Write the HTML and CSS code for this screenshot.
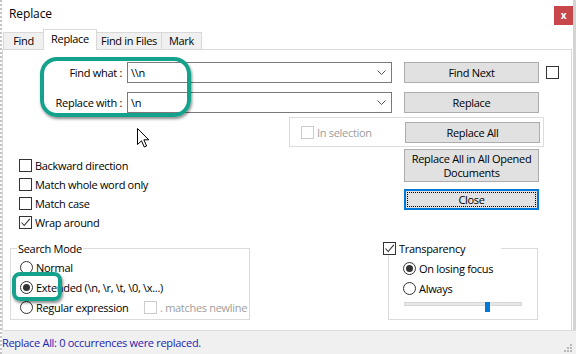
FILE: index.html
```html
<!DOCTYPE html>
<html lang="en">
<head>
    <meta charset="UTF-8">
    <title>Replace</title>
    <link rel="stylesheet" href="styles.css">
</head>
<body>
    <div class="window">
        <div class="titlebar">
            <span class="title">Replace</span>
            <span class="close-btn">x</span>
        </div>

        <div class="tabs">
            <div class="tab tab-find">Find</div>
            <div class="tab tab-replace active">Replace</div>
            <div class="tab tab-files">Find in Files</div>
            <div class="tab tab-mark">Mark</div>
        </div>

        <div class="panel">
            <div class="field-row first">
                <label class="field-label">Find what :</label>
                <div class="combo">
                    <span>\\n</span>
                    <svg class="chevron" width="9" height="6" viewBox="0 0 9 6"><polyline points="0.5,0.5 4.5,4.5 8.5,0.5" fill="none" stroke="#555" stroke-width="1"/></svg>
                </div>
                <button class="btn">Find Next</button>
                <span class="box"></span>
            </div>

            <div class="field-row">
                <label class="field-label">Replace with :</label>
                <div class="combo">
                    <span>\n</span>
                    <svg class="chevron" width="9" height="6" viewBox="0 0 9 6"><polyline points="0.5,0.5 4.5,4.5 8.5,0.5" fill="none" stroke="#555" stroke-width="1"/></svg>
                </div>
                <button class="btn">Replace</button>
            </div>

            <div class="selection-row">
                <div class="selection-box">
                    <span class="box disabled"></span>
                    <span class="muted">In selection</span>
                    <button class="btn">Replace All</button>
                </div>
            </div>

            <div class="middle">
                <div class="options">
                    <div class="check-row"><span class="box"></span>Backward direction</div>
                    <div class="check-row"><span class="box"></span>Match whole word only</div>
                    <div class="check-row"><span class="box"></span>Match case</div>
                    <div class="check-row"><span class="box checked"><svg width="11" height="11" viewBox="0 0 11 11"><polyline points="1.5,5.5 4.2,8.5 9.8,1.8" fill="none" stroke="#333" stroke-width="1.1"/></svg></span>Wrap around</div>
                </div>
                <div class="side-buttons">
                    <button class="btn tall">Replace All in All Opened<br>Documents</button>
                    <button class="btn focused">Close</button>
                </div>
            </div>

            <div class="modes">
                <fieldset class="group search-mode">
                    <legend>Search Mode</legend>
                    <div class="radio-row"><span class="radio"></span>Normal</div>
                    <div class="radio-row"><span class="radio on"></span>Extended (\n, \r, \t, \0, \x...)</div>
                    <div class="radio-row">
                        <span class="radio-label"><span class="radio"></span>Regular expression</span>
                        <span class="box disabled"></span>
                        <span class="muted">. matches newline</span>
                    </div>
                </fieldset>

                <fieldset class="group transparency">
                    <legend>
                        <span class="box checked"><svg width="11" height="11" viewBox="0 0 11 11"><polyline points="1.5,5.5 4.2,8.5 9.8,1.8" fill="none" stroke="#333" stroke-width="1.1"/></svg></span>
                        Transparency
                    </legend>
                    <div class="radio-row"><span class="radio on"></span>On losing focus</div>
                    <div class="radio-row"><span class="radio"></span>Always</div>
                    <div class="slider">
                        <div class="track"></div>
                        <div class="thumb" style="left: 81px"></div>
                    </div>
                </fieldset>
            </div>
        </div>

        <div class="statusbar">Replace All: 0 occurrences were replaced.</div>
    </div>

    <!-- screenshot annotations -->
    <div class="mark mark-fields"></div>
    <div class="mark mark-extended"></div>

    <svg class="cursor" width="13" height="20" viewBox="0 0 13 20">
        <path d="M0.5,0.5 L0.5,16.5 L4.5,12.8 L7.3,19 L9.6,18 L6.9,11.8 L11.8,11.8 Z" fill="#fff" stroke="#000" stroke-width="1" stroke-linejoin="round"/>
    </svg>

    <svg class="grip" width="10" height="10" viewBox="0 0 10 10">
        <rect x="7" y="1" width="2" height="2" fill="#b8b8b8"/>
        <rect x="4" y="4" width="2" height="2" fill="#b8b8b8"/>
        <rect x="7" y="4" width="2" height="2" fill="#b8b8b8"/>
        <rect x="1" y="7" width="2" height="2" fill="#b8b8b8"/>
        <rect x="4" y="7" width="2" height="2" fill="#b8b8b8"/>
        <rect x="7" y="7" width="2" height="2" fill="#b8b8b8"/>
    </svg>
</body>
</html>
```

FILE: styles.css
```css
* {
    margin: 0;
    padding: 0;
    box-sizing: border-box;
}

body {
    position: relative;
    width: 576px;
    height: 354px;
    overflow: hidden;
    font-family: "Open Sans", "Noto Sans", sans-serif;
    font-size: 11px;
    letter-spacing: -0.3px;
    color: #000;
    background: #fff;
}

.window {
    display: flex;
    flex-direction: column;
    height: 354px;
    border-left: 2px dotted #c4c4c4;
    border-right: 3px solid #d4d4d4;
}

/* title bar */
.titlebar {
    height: 29px;
    display: flex;
    align-items: flex-start;
    justify-content: space-between;
    padding-left: 7px;
}

.title {
    font-size: 12px;
    letter-spacing: -0.1px;
    line-height: 14px;
    margin-top: 7px;
}

.close-btn {
    width: 19px;
    height: 19px;
    margin-top: 6px;
    background: #c7474b;
    color: #fff;
    font-weight: bold;
    font-size: 10px;
    line-height: 18px;
    text-align: center;
}

/* tabs */
.tabs {
    position: relative;
    z-index: 1;
    height: 20px;
    display: flex;
    align-items: flex-start;
    padding-left: 1px;
}

.tab {
    height: 17px;
    margin-top: 3px;
    margin-right: -1px;
    border: 1px solid #d9d9d9;
    border-bottom: none;
    background: #f0f0f0;
    text-align: center;
    line-height: 16px;
}

.tab.active {
    height: 21px;
    margin-top: 0;
    background: #fff;
    line-height: 18px;
}

.tab-find { width: 41px; }
.tab-replace { width: 54px; }
.tab-files { width: 66px; }
.tab-mark { width: 41px; }

/* main panel */
.panel {
    flex: 1;
    display: flex;
    flex-direction: column;
    border: 1px solid #d9d9d9;
    border-bottom: none;
    margin-right: 1px;
}

.field-row {
    display: flex;
    align-items: center;
    height: 21px;
    margin-top: 9px;
}

.field-row.first {
    margin-top: 12px;
}

.field-label {
    width: 119px;
    text-align: right;
}

.combo {
    width: 265px;
    height: 21px;
    margin-left: 5px;
    border: 1px solid #7a7a7a;
    display: flex;
    align-items: center;
    justify-content: space-between;
    padding: 0 5px 0 3px;
}

.btn {
    width: 135px;
    height: 21px;
    margin-left: 12px;
    background: #e1e1e1;
    border: 1px solid #adadad;
    font: inherit;
    letter-spacing: inherit;
    color: #000;
}

.btn.tall {
    height: 33px;
    line-height: 14px;
    margin-left: 0;
}

.btn.focused {
    margin-left: 0;
    border: 1px solid #0078d7;
    box-shadow: inset 0 0 0 1px #0078d7;
    outline: 1px dotted #000;
    outline-offset: -4px;
}

.field-row .box {
    margin-left: 7px;
}

/* checkbox and radio */
.box {
    width: 13px;
    height: 13px;
    flex: none;
    border: 1px solid #333;
    background: #fff;
    display: inline-flex;
    align-items: center;
    justify-content: center;
}

.box.disabled {
    border-color: #cccccc;
}

.radio {
    width: 13px;
    height: 13px;
    flex: none;
    border: 1px solid #333;
    border-radius: 50%;
    display: inline-flex;
    align-items: center;
    justify-content: center;
}

.radio.on::after {
    content: "";
    width: 7px;
    height: 7px;
    border-radius: 50%;
    background: #333;
}

.muted {
    color: #9d9d9d;
}

/* in selection */
.selection-row {
    margin-top: 4px;
}

.selection-box {
    margin-left: 286px;
    width: 255px;
    height: 30px;
    border: 1px solid #dcdcdc;
    display: flex;
    align-items: center;
    gap: 3px;
    padding: 0 3px 0 11px;
}

.selection-box .btn {
    margin-left: auto;
}

/* options + side buttons */
.middle {
    display: flex;
    margin-top: 2px;
}

.options {
    width: 401px;
    padding: 10px 0 0 16px;
    display: flex;
    flex-direction: column;
    gap: 6px;
}

.check-row {
    display: flex;
    align-items: center;
    gap: 3px;
    height: 13px;
}

.side-buttons {
    display: flex;
    flex-direction: column;
    gap: 7px;
}

/* search mode / transparency */
.modes {
    display: flex;
    align-items: flex-start;
    margin-top: 13px;
}

.group {
    height: 78px;
    border: 1px solid #dcdcdc;
    padding: 0;
}

.group legend {
    height: 13px;
    line-height: 13px;
}

.search-mode {
    margin-left: 7px;
    width: 240px;
}

.search-mode legend {
    margin-left: 6px;
    padding: 0 1px;
}

.search-mode .radio-row:first-of-type {
    margin-top: 2px;
}

.radio-row {
    display: flex;
    align-items: center;
    gap: 3px;
    height: 20px;
    padding-left: 9px;
}

.radio-label {
    display: flex;
    align-items: center;
    gap: 3px;
    width: 121px;
}

.transparency {
    margin-left: 138px;
    width: 150px;
}

.transparency legend {
    display: flex;
    align-items: center;
    gap: 3px;
    margin-left: -6px;
    padding-right: 36px;
}

.transparency .radio-row {
    padding-left: 14px;
}

.transparency .radio-row:first-of-type {
    margin-top: 3px;
}

.slider {
    position: relative;
    width: 118px;
    height: 11px;
    margin: 1px 0 0 15px;
}

.track {
    margin-top: 4px;
    height: 4px;
    background: #e7e7e7;
    border: 1px solid #d8d8d8;
}

.thumb {
    position: absolute;
    top: 0;
    width: 5px;
    height: 10px;
    background: #0078d7;
}

/* status bar */
.statusbar {
    height: 24px;
    border-top: 1px solid #dcdcdc;
    background: #f0f0f0;
    color: #2424b4;
    line-height: 23px;
    margin-right: -3px;
}

/* overlays */
.mark {
    position: absolute;
    border: 4px solid #14a28c;
    box-shadow: 1px 2px 3px rgba(0, 0, 0, 0.45);
}

.mark-fields {
    left: 40px;
    top: 57px;
    width: 151px;
    height: 60px;
    border-radius: 17px;
}

.mark-extended {
    left: 12px;
    top: 272px;
    width: 50px;
    height: 29px;
    border-radius: 8px;
}

.cursor {
    position: absolute;
    left: 137px;
    top: 128px;
}

.grip {
    position: absolute;
    right: 3px;
    bottom: 1px;
}
```
